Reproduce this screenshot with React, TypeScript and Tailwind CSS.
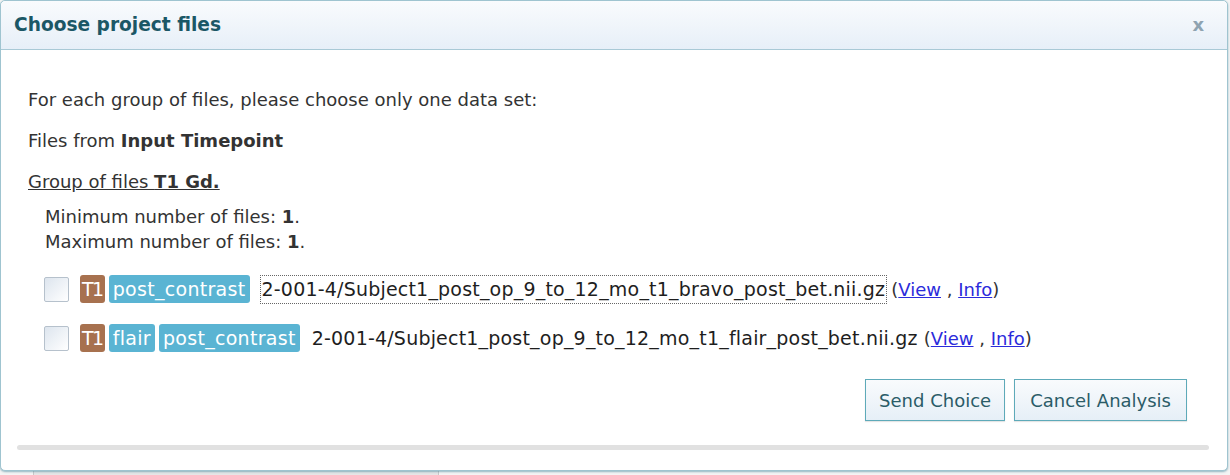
import React from "react";

function Tag({ color, children, tight }: { color: "brown" | "blue"; children: React.ReactNode; tight?: boolean }) {
  return (
    <span
      className={
        (color === "brown" ? "bg-[#a7714f]" : "bg-[#5ab4d3]") +
        (tight ? " px-[2px] tracking-[-1.5px]" : " px-[4px] tracking-[0.3px]") +
        " text-white rounded-[3px] h-[28px] leading-[28px] inline-block text-[19px]"
      }
    >
      {children}
    </span>
  );
}

function Checkbox() {
  return (
    <span className="inline-block w-[25px] h-[25px] border border-[#b6c1cc] rounded-[2px] bg-gradient-to-br from-[#dde5ee] to-[#ffffff] shrink-0" />
  );
}

function FileRow({ tags, name, focused }: { tags: { c: "brown" | "blue"; t: string }[]; name: string; focused?: boolean }) {
  return (
    <div className="flex items-center h-[28px]">
      <Checkbox />
      <div className="flex items-center gap-[4px] ml-[11px]">
        {tags.map((t, i) => (
          <Tag key={i} color={t.c} tight={t.t === "T1"}>
            {t.t}
          </Tag>
        ))}
      </div>
      <span
        className={
          "ml-[11px] text-[#1e1e1e] text-[19px] tracking-[0.2px] px-[1px] leading-[27px] whitespace-nowrap " +
          (focused ? "outline outline-1 outline-dotted outline-[#666]" : "")
        }
      >
        {name}
      </span>
      <span className="text-[#333] text-[18px] ml-[5px] whitespace-nowrap">
        (<a className="text-[#2b2bdb] underline">View</a> , <a className="text-[#2b2bdb] underline">Info</a>)
      </span>
    </div>
  );
}

export default function App() {
  return (
    <div
      className="w-[1230px] h-[475px] bg-[#f4f4f4] relative overflow-hidden"
      style={{ fontFamily: '"DejaVu Sans", "Noto Sans", sans-serif' }}
    >
      <div className="absolute left-[33px] top-[469px] w-[406px] h-[10px] bg-[#e6e6e6] border border-[#c8c8c8]" />
      <div className="absolute left-0 top-0 w-[1228px] h-[471px] bg-white border border-[#9fc4d0] rounded-[5px] shadow-[0_1px_2px_rgba(80,140,160,0.6)] flex flex-col">
        <div className="h-[49px] flex items-center justify-between px-[13px] border-b border-[#a9c9d6] bg-gradient-to-b from-[#f9fbfd] to-[#e7eff8] rounded-t-[5px]">
          <span className="text-[#1b5766] font-bold text-[18.6px]">Choose project files</span>
          <span className="text-[#8ea3b1] font-bold text-[18px] mr-[10px] leading-none">x</span>
        </div>
        <div className="flex-1 flex flex-col px-[16px] pt-[38px] text-[#333] text-[18px]">
          <p className="ml-[11px] leading-[24px]">For each group of files, please choose only one data set:</p>
          <p className="ml-[11px] leading-[24px] mt-[17px]">
            Files from <b className="font-bold">Input Timepoint</b>
          </p>
          <p className="ml-[11px] leading-[24px] mt-[17px] underline">
            Group of files <b className="font-bold">T1 Gd.</b>
          </p>
          <div className="ml-[28px] mt-[10px] leading-[25px]">
            <div>
              Minimum number of files: <b className="font-bold">1</b>.
            </div>
            <div>
              Maximum number of files: <b className="font-bold">1</b>.
            </div>
          </div>
          <div className="ml-[27px] mt-[21px] flex flex-col gap-[21px]">
            <FileRow
              tags={[
                { c: "brown", t: "T1" },
                { c: "blue", t: "post_contrast" },
              ]}
              name="2-001-4/Subject1_post_op_9_to_12_mo_t1_bravo_post_bet.nii.gz"
              focused
            />
            <FileRow
              tags={[
                { c: "brown", t: "T1" },
                { c: "blue", t: "flair" },
                { c: "blue", t: "post_contrast" },
              ]}
              name="2-001-4/Subject1_post_op_9_to_12_mo_t1_flair_post_bet.nii.gz"
            />
          </div>
          <div className="flex justify-end gap-[9px] mt-[27px] mr-[24px]">
            <button className="h-[42px] px-[13px] border border-[#5eaab9] bg-gradient-to-b from-[#f9fbfd] to-[#e6eff7] text-[#2b5c68] text-[18px] shadow-[0_1px_1px_rgba(0,0,0,0.1)]">
              Send Choice
            </button>
            <button className="h-[42px] px-[15px] border border-[#5eaab9] bg-gradient-to-b from-[#f9fbfd] to-[#e6eff7] text-[#2b5c68] text-[18px] shadow-[0_1px_1px_rgba(0,0,0,0.1)]">
              Cancel Analysis
            </button>
          </div>
          <div className="mt-[24px] h-[5px] rounded-full bg-[#e1e1e1] mr-[2px]" />
        </div>
      </div>
    </div>
  );
}
